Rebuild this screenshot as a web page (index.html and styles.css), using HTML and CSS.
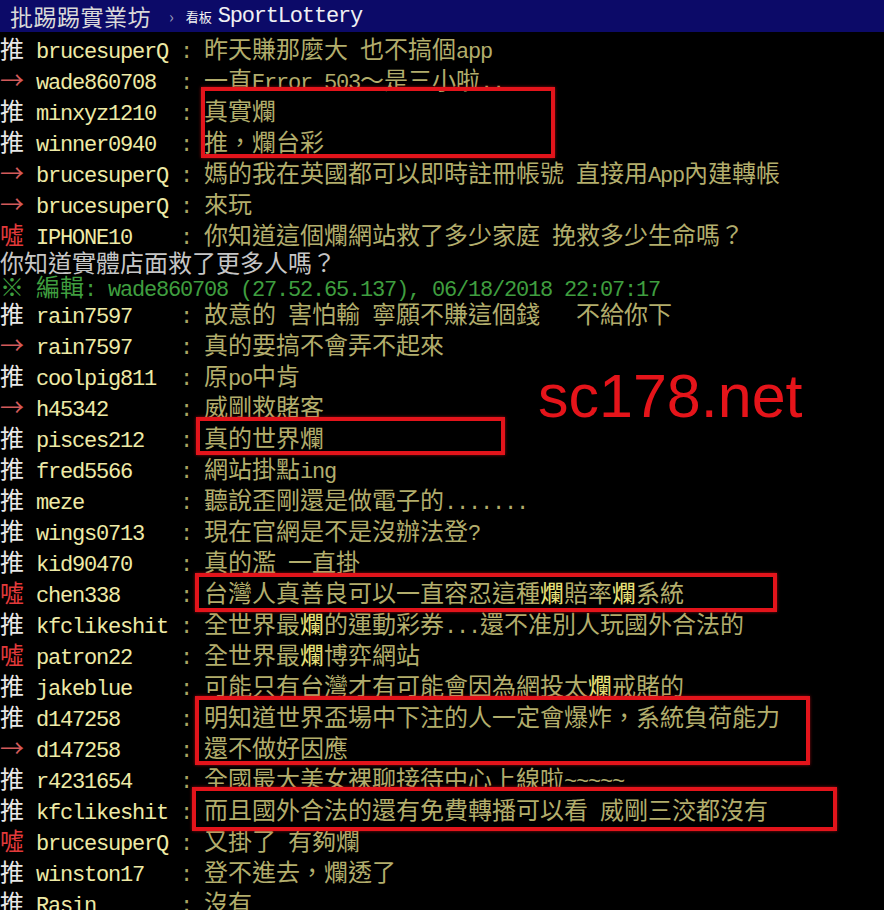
FILE: index.html
```html
<!DOCTYPE html>
<html lang="zh-Hant">
<head>
<meta charset="utf-8">
<title>SportLottery</title>
<link rel="stylesheet" href="styles.css">
</head>
<body>
<div class="screen">
  <div class="topbar">
    <span class="site">批踢踢實業坊</span>
    <span class="sep">›</span>
    <span class="board-label">看板</span>
    <span class="board a">SportLottery</span>
  </div>
  <div class="rows">
    <div class="row"><span class="tag push">推</span><span class="uid"><span class="a">brucesuperQ</span></span><span class="colon"><span class="a">:</span></span><span class="msg">昨天賺那麼大<span class="a"> </span>也不搞個<span class="a">app</span></span></div>
    <div class="row"><span class="tag arrow">→</span><span class="uid"><span class="a">wade860708</span></span><span class="colon"><span class="a">:</span></span><span class="msg">一直<span class="a">Error 503</span>～是三小啦<span class="a">..</span></span></div>
    <div class="row"><span class="tag push">推</span><span class="uid"><span class="a">minxyz1210</span></span><span class="colon"><span class="a">:</span></span><span class="msg">真實爛</span></div>
    <div class="row"><span class="tag push">推</span><span class="uid"><span class="a">winner0940</span></span><span class="colon"><span class="a">:</span></span><span class="msg">推，爛台彩</span></div>
    <div class="row"><span class="tag arrow">→</span><span class="uid"><span class="a">brucesuperQ</span></span><span class="colon"><span class="a">:</span></span><span class="msg">媽的我在英國都可以即時註冊帳號<span class="a"> </span>直接用<span class="a">App</span>內建轉帳</span></div>
    <div class="row"><span class="tag arrow">→</span><span class="uid"><span class="a">brucesuperQ</span></span><span class="colon"><span class="a">:</span></span><span class="msg">來玩</span></div>
    <div class="row"><span class="tag boo">噓</span><span class="uid"><span class="a">IPHONE10</span></span><span class="colon"><span class="a">:</span></span><span class="msg">你知道這個爛網站救了多少家庭<span class="a"> </span>挽救多少生命嗎？</span></div>
    <div class="line gray">你知道實體店面救了更多人嗎？</div>
    <div class="line edit">※<span class="a"> </span>編輯<span class="a">: wade860708 (27.52.65.137), 06/18/2018 22:07:17</span></div>
    <div class="row"><span class="tag push">推</span><span class="uid"><span class="a">rain7597</span></span><span class="colon"><span class="a">:</span></span><span class="msg">故意的<span class="a"> </span>害怕輸<span class="a"> </span>寧願不賺這個錢<span class="a">   </span>不給你下</span></div>
    <div class="row"><span class="tag arrow">→</span><span class="uid"><span class="a">rain7597</span></span><span class="colon"><span class="a">:</span></span><span class="msg">真的要搞不會弄不起來</span></div>
    <div class="row"><span class="tag push">推</span><span class="uid"><span class="a">coolpig811</span></span><span class="colon"><span class="a">:</span></span><span class="msg">原<span class="a">po</span>中肯</span></div>
    <div class="row"><span class="tag arrow">→</span><span class="uid"><span class="a">h45342</span></span><span class="colon"><span class="a">:</span></span><span class="msg">威剛救賭客</span></div>
    <div class="row"><span class="tag push">推</span><span class="uid"><span class="a">pisces212</span></span><span class="colon"><span class="a">:</span></span><span class="msg">真的世界爛</span></div>
    <div class="row"><span class="tag push">推</span><span class="uid"><span class="a">fred5566</span></span><span class="colon"><span class="a">:</span></span><span class="msg">網站掛點<span class="a">ing</span></span></div>
    <div class="row"><span class="tag push">推</span><span class="uid"><span class="a">meze</span></span><span class="colon"><span class="a">:</span></span><span class="msg">聽說歪剛還是做電子的<span class="a">.......</span></span></div>
    <div class="row"><span class="tag push">推</span><span class="uid"><span class="a">wings0713</span></span><span class="colon"><span class="a">:</span></span><span class="msg">現在官網是不是沒辦法登<span class="a">?</span></span></div>
    <div class="row"><span class="tag push">推</span><span class="uid"><span class="a">kid90470</span></span><span class="colon"><span class="a">:</span></span><span class="msg">真的濫<span class="a"> </span>一直掛</span></div>
    <div class="row"><span class="tag boo">噓</span><span class="uid"><span class="a">chen338</span></span><span class="colon"><span class="a">:</span></span><span class="msg">台灣人真善良可以一直容忍這種<span class="hl">爛</span>賠率<span class="hl">爛</span>系統</span></div>
    <div class="row"><span class="tag push">推</span><span class="uid"><span class="a">kfclikeshit</span></span><span class="colon"><span class="a">:</span></span><span class="msg">全世界最<span class="hl">爛</span>的運動彩券<span class="a">...</span>還不准別人玩國外合法的</span></div>
    <div class="row"><span class="tag boo">噓</span><span class="uid"><span class="a">patron22</span></span><span class="colon"><span class="a">:</span></span><span class="msg">全世界最<span class="hl">爛</span>博弈網站</span></div>
    <div class="row"><span class="tag push">推</span><span class="uid"><span class="a">jakeblue</span></span><span class="colon"><span class="a">:</span></span><span class="msg">可能只有台灣才有可能會因為網投太<span class="hl">爛</span>戒賭的</span></div>
    <div class="row"><span class="tag push">推</span><span class="uid"><span class="a">d147258</span></span><span class="colon"><span class="a">:</span></span><span class="msg">明知道世界盃場中下注的人一定會爆炸，系統負荷能力</span></div>
    <div class="row"><span class="tag arrow">→</span><span class="uid"><span class="a">d147258</span></span><span class="colon"><span class="a">:</span></span><span class="msg">還不做好因應</span></div>
    <div class="row"><span class="tag push">推</span><span class="uid"><span class="a">r4231654</span></span><span class="colon"><span class="a">:</span></span><span class="msg">全國最大美女裸聊接待中心上線啦<span class="a">~~~~~</span></span></div>
    <div class="row"><span class="tag push">推</span><span class="uid"><span class="a">kfclikeshit</span></span><span class="colon"><span class="a">:</span></span><span class="msg">而且國外合法的還有免費轉播可以看<span class="a"> </span>威剛三洨都沒有</span></div>
    <div class="row"><span class="tag boo">噓</span><span class="uid"><span class="a">brucesuperQ</span></span><span class="colon"><span class="a">:</span></span><span class="msg">又掛了<span class="a"> </span>有夠爛</span></div>
    <div class="row"><span class="tag push">推</span><span class="uid"><span class="a">winston17</span></span><span class="colon"><span class="a">:</span></span><span class="msg">登不進去，爛透了</span></div>
    <div class="row"><span class="tag push">推</span><span class="uid"><span class="a">Rasin</span></span><span class="colon"><span class="a">:</span></span><span class="msg">沒有</span></div>
  </div>

  <div class="mark box1"></div>
  <div class="mark box2"></div>
  <div class="mark box3"></div>
  <div class="mark box4"></div>
  <div class="mark box5"></div>
  <div class="watermark">sc178.net</div>
</div>
</body>
</html>
```

FILE: styles.css
```css
html, body {
  margin: 0;
  padding: 0;
  background: #000;
}

.screen {
  position: relative;
  width: 884px;
  height: 910px;
  overflow: hidden;
  background: #000;
  font-family: "Noto Sans CJK TC", "Noto Sans CJK SC", sans-serif;
  font-size: 24px;
}

.a {
  font-family: "Liberation Mono", "DejaVu Sans Mono", monospace;
  font-size: 22px;
  letter-spacing: -1.2px;
  white-space: pre;
}

/* top bar */
.topbar {
  height: 32px;
  background: #0c0a68;
  display: flex;
  align-items: center;
  padding-left: 10px;
  color: #dcdcdc;
  white-space: nowrap;
}

.site {
  font-size: 23px;
  letter-spacing: 0.5px;
  color: #d9d9d9;
}

.sep {
  margin-left: 18px;
  font-size: 16px;
  color: #9a9ab8;
}

.board-label {
  margin-left: 12px;
  font-size: 13px;
  color: #f2f2f2;
}

.board {
  margin-left: 6px;
  color: #f0f0f4;
}

/* rows */
.rows {
  display: flex;
  flex-direction: column;
}

.row {
  display: grid;
  grid-template-columns: 36px 144px 24px 1fr;
  height: 31px;
  line-height: 31px;
  white-space: pre;
}

.tag {
  font-size: 24px;
}

.push {
  color: #e8e8e8;
}

.arrow {
  color: #d25a5a;
}

.boo {
  color: #e23a3a;
}

.uid {
  color: #eeeaa6;
}

.colon {
  color: #a9a664;
}

.msg {
  color: #b2ad6c;
}

.hl {
  color: #e9e27a;
}

.line {
  white-space: pre;
}

.gray {
  height: 26px;
  line-height: 26px;
  color: #c6c6c6;
}

.edit {
  height: 22px;
  line-height: 22px;
  color: #3f9e3f;
}

/* annotations drawn over the screenshot */
.mark {
  position: absolute;
  border: 4px solid #e3141b;
  box-shadow: 0 0 3px rgba(227, 20, 27, 0.6);
  box-sizing: border-box;
}

.box1 { left: 201px; top: 87px;  width: 354px; height: 71px; }
.box2 { left: 196px; top: 417px; width: 309px; height: 38px; }
.box3 { left: 195px; top: 573px; width: 582px; height: 39px; }
.box4 { left: 195px; top: 696px; width: 615px; height: 69px; }
.box5 { left: 192px; top: 787px; width: 645px; height: 44px; }

.watermark {
  position: absolute;
  left: 538px;
  top: 366px;
  font-family: "Liberation Sans", Arial, sans-serif;
  font-size: 61px;
  line-height: 61px;
  color: #e5141a;
}
```
